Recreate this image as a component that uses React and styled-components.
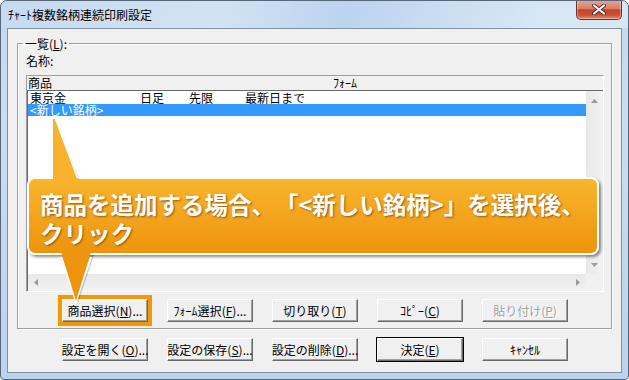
import styled, { createGlobalStyle, css } from "styled-components";

const GlobalStyle = createGlobalStyle`
  html, body {
    margin: 0;
    padding: 0;
    background: #ffffff;
  }
  body {
    font-family: "Noto Sans CJK JP", "Noto Sans", sans-serif;
    font-size: 12px;
    color: #000;
    text-spacing-trim: space-all;
  }
`;

const rows = [
  { name: "東京金", span: "日足", month: "先限", period: "最新日まで" },
  { name: "<新しい銘柄>", selected: true },
];

const topButtons = [
  { label: "商品選択", key: "N", dots: true, highlight: true },
  { label: "ﾌｫｰﾑ選択", key: "F", dots: true },
  { label: "切り取り", key: "T" },
  { label: "ｺﾋﾟｰ", key: "C" },
  { label: "貼り付け", key: "P", disabled: true },
];

const bottomButtons = [
  { label: "設定を開く", key: "O", dots: true },
  { label: "設定の保存", key: "S", dots: true },
  { label: "設定の削除", key: "D", dots: true },
  { label: "決定", key: "E", primary: true },
  { label: "ｷｬﾝｾﾙ" },
];

const App = () => {
  return (
    <>
      <GlobalStyle />
      <Window>
        <TitleBar>
          <Title>ﾁｬｰﾄ複数銘柄連続印刷設定</Title>
          <CloseButton>
            <svg width="14" height="11" viewBox="0 0 14 11">
              <path d="M2 1.5 L12 9.5 M12 1.5 L2 9.5" stroke="#5a2a20" strokeWidth="4" strokeLinecap="round" />
              <path d="M2 1.5 L12 9.5 M12 1.5 L2 9.5" stroke="#ffffff" strokeWidth="2.2" strokeLinecap="round" />
            </svg>
          </CloseButton>
        </TitleBar>

        <Client>
          <Group>
            <Legend>一覧(<u>L</u>):</Legend>
            <FieldLabel>名称:</FieldLabel>

            <ListFrame>
              <HeaderRow>
                <HeaderCell $w={305}>商品</HeaderCell>
                <HeaderCell>ﾌｫｰﾑ</HeaderCell>
              </HeaderRow>
              <ListBody>
                <Rows>
                  {rows.map((r) => (
                    <Row key={r.name} $selected={r.selected}>
                      <Cell $w={110}>{r.name}</Cell>
                      <Cell $w={49}>{r.span}</Cell>
                      <Cell $w={56}>{r.month}</Cell>
                      <Cell>{r.period}</Cell>
                    </Row>
                  ))}
                </Rows>
                <VScroll>
                  <Arrow viewBox="0 0 7 4" width="7" height="4"><polygon points="0,4 7,4 3.5,0" /></Arrow>
                  <Arrow viewBox="0 0 7 4" width="7" height="4"><polygon points="0,0 7,0 3.5,4" /></Arrow>
                </VScroll>
                <HScroll>
                  <Arrow viewBox="0 0 4 7" width="4" height="7"><polygon points="4,0 4,7 0,3.5" /></Arrow>
                  <Arrow viewBox="0 0 4 7" width="4" height="7"><polygon points="0,0 0,7 4,3.5" /></Arrow>
                </HScroll>
                <Corner />
              </ListBody>
            </ListFrame>

            <ButtonRow $indent={36} $top={7}>
              {topButtons.map((b) => (
                <Button key={b.label} $highlight={b.highlight} $disabled={b.disabled}>
                  {b.label}(<u>{b.key}</u>){b.dots && "..."}
                </Button>
              ))}
            </ButtonRow>
          </Group>

          <ButtonRow $indent={54} $top={9}>
            {bottomButtons.map((b) => (
              <Button key={b.label} $primary={b.primary}>
                {b.label}
                {b.key && (
                  <>
                    (<u>{b.key}</u>)
                  </>
                )}
                {b.dots && "..."}
              </Button>
            ))}
          </ButtonRow>
        </Client>

        <Callout>
          <CalloutText>
            商品を追加する場合、「&lt;新しい銘柄&gt;」を選択後、
            <br />
            クリック
          </CalloutText>
        </Callout>

        <UpPointer width="32" height="66" viewBox="0 0 32 66">
          <polygon points="6,3 29,62 8,62" fill="rgba(0,0,0,0.22)" />
          <polygon points="3,2 5,2 28,64 3,64" fill="#f8b22b" />
          <line x1="5.5" y1="2" x2="27.5" y2="61" stroke="#ffffff" strokeWidth="1.4" />
        </UpPointer>

        <DownPointer width="36" height="54" viewBox="0 0 36 54">
          <polygon points="3,3 35,3 19,51" fill="rgba(0,0,0,0.2)" />
          <polyline points="2,5 17,49 32,5" fill="none" stroke="#ffffff" strokeWidth="2.2" />
          <polygon points="2,0 32,0 17,49" fill="#ee950e" />
        </DownPointer>
      </Window>
    </>
  );
};

const Window = styled.div`
  position: relative;
  width: 629px;
  height: 380px;
  box-sizing: border-box;
  border: 1px solid #56677a;
  border-radius: 7px 7px 4px 4px;
  background: linear-gradient(180deg, #c2d8ef 0%, #cadef3 30%, #bcd3ec 100%);
  display: flex;
  flex-direction: column;
  overflow: hidden;
`;

const TitleBar = styled.div`
  height: 27px;
  flex: none;
  display: flex;
  align-items: center;
  padding-left: 7px;
  background: linear-gradient(100deg, rgba(255, 255, 255, 0.05) 0%, rgba(255, 255, 255, 0.25) 35%, rgba(170, 200, 235, 0.3) 55%, rgba(255, 255, 255, 0.35) 85%);
`;

const Title = styled.span`
  font-size: 12px;
  line-height: 14px;
  color: #000;
`;

const CloseButton = styled.div`
  align-self: flex-start;
  margin: -1px 6px 0 auto;
  width: 46px;
  height: 20px;
  box-sizing: border-box;
  border: 1px solid #6b3126;
  border-top: none;
  border-radius: 0 0 5px 5px;
  background: linear-gradient(180deg, #e7a698 0%, #da7d69 45%, #c2432c 52%, #cc5236 80%, #e48f6f 100%);
  box-shadow: inset 0 0 0 1px rgba(255, 255, 255, 0.35);
  display: flex;
  align-items: center;
  justify-content: center;
`;

const Client = styled.div`
  flex: 1;
  margin: 0 6px 6px;
  border: 1px solid #7f909f;
  background: #f0f0f0;
  display: flex;
  flex-direction: column;
`;

const Group = styled.fieldset`
  margin: 8px 9px 0;
  padding: 4px 7px 6px 8px;
  border: 1px solid #a0a0a0;
  box-shadow: inset 1px 1px 0 #ffffff, 1px 1px 0 #ffffff;
  min-inline-size: 0;
`;

const Legend = styled.legend`
  margin-left: -3px;
  padding: 0 2px;
  font-size: 12px;
  line-height: 13px;
`;

const FieldLabel = styled.div`
  font-size: 12px;
  line-height: 13px;
`;

const ListFrame = styled.div`
  margin-top: 8px;
  width: 578px;
  height: 217px;
  box-sizing: border-box;
  border-top: 1px solid #a0a0a0;
  border-left: 1px solid #a0a0a0;
  border-right: 1px solid #ffffff;
  border-bottom: 1px solid #ffffff;
  display: flex;
  flex-direction: column;
`;

const HeaderRow = styled.div`
  height: 14px;
  flex: none;
  display: flex;
  padding-left: 1px;
  font-size: 12px;
  line-height: 14px;
`;

const HeaderCell = styled.span`
  width: ${(p) => (p.$w ? `${p.$w}px` : "auto")};
  flex: none;
`;

const ListBody = styled.div`
  flex: 1;
  min-height: 0;
  border-top: 1px solid #696969;
  border-left: 1px solid #696969;
  background: #ffffff;
  display: grid;
  grid-template-columns: 1fr 17px;
  grid-template-rows: 1fr 17px;
`;

const Rows = styled.div`
  padding-top: 1px;
`;

const Row = styled.div`
  height: 12px;
  display: flex;
  align-items: center;
  padding-left: 2px;
  font-size: 12px;
  line-height: 12px;
  white-space: pre;
  ${(p) =>
    p.$selected &&
    css`
      background: #3399ff;
      color: #ffffff;
    `}
`;

const Cell = styled.span`
  width: ${(p) => (p.$w ? `${p.$w}px` : "auto")};
  flex: none;
`;

const VScroll = styled.div`
  background: linear-gradient(90deg, #e8e8e8, #f2f2f2);
  display: flex;
  flex-direction: column;
  justify-content: space-between;
  align-items: center;
  padding: 8px 0 7px;
  box-sizing: border-box;
`;

const HScroll = styled.div`
  background: linear-gradient(180deg, #e8e8e8, #f2f2f2);
  display: flex;
  justify-content: space-between;
  align-items: center;
  padding: 0 6px 0 6px;
`;

const Corner = styled.div`
  background: #f0f0f0;
`;

const Arrow = styled.svg`
  fill: #9a9a9a;
  display: block;
`;

const ButtonRow = styled.div`
  display: flex;
  gap: 19px;
  padding-left: ${(p) => p.$indent}px;
  margin-top: ${(p) => p.$top}px;
`;

const Button = styled.div`
  width: 86px;
  height: 23px;
  box-sizing: border-box;
  display: flex;
  align-items: center;
  justify-content: center;
  font-size: 12px;
  line-height: 14px;
  white-space: nowrap;
  background: #f0f0f0;
  border-top: 1px solid #ffffff;
  border-left: 1px solid #ffffff;
  border-right: 1px solid #696969;
  border-bottom: 1px solid #696969;
  box-shadow: inset -1px -1px 0 #a0a0a0;
  color: ${(p) => (p.$disabled ? "#a0a0a0" : "#000")};
  text-shadow: ${(p) => (p.$disabled ? "1px 1px 0 #ffffff" : "none")};
  ${(p) =>
    p.$primary &&
    css`
      outline: 1px solid #000000;
    `}
  ${(p) =>
    p.$highlight &&
    css`
      box-shadow: inset -1px -1px 0 #a0a0a0, 0 0 0 4px #f39800;
    `}
  u {
    text-underline-offset: 1px;
  }
`;

const Callout = styled.div`
  position: absolute;
  left: 26px;
  top: 176px;
  width: 572px;
  height: 78px;
  box-sizing: border-box;
  border: 2px solid #ffffff;
  border-radius: 8px;
  background: linear-gradient(180deg, #f9b52c 0%, #f3a41d 50%, #ec940c 100%);
  box-shadow: 2px 2px 3px rgba(0, 0, 0, 0.45);
  padding: 11px 0 0 11px;
`;

const CalloutText = styled.div`
  font-family: "Noto Sans CJK JP", "Noto Sans", sans-serif;
  font-size: 23.5px;
  font-weight: 700;
  line-height: 29px;
  color: #ffffff;
  white-space: nowrap;
  text-spacing-trim: space-all;
  text-shadow: 1px 1px 2px rgba(90, 40, 0, 0.6);
`;

const UpPointer = styled.svg`
  position: absolute;
  left: 49px;
  top: 116px;
`;

const DownPointer = styled.svg`
  position: absolute;
  left: 58px;
  top: 251px;
`;

export default App;
